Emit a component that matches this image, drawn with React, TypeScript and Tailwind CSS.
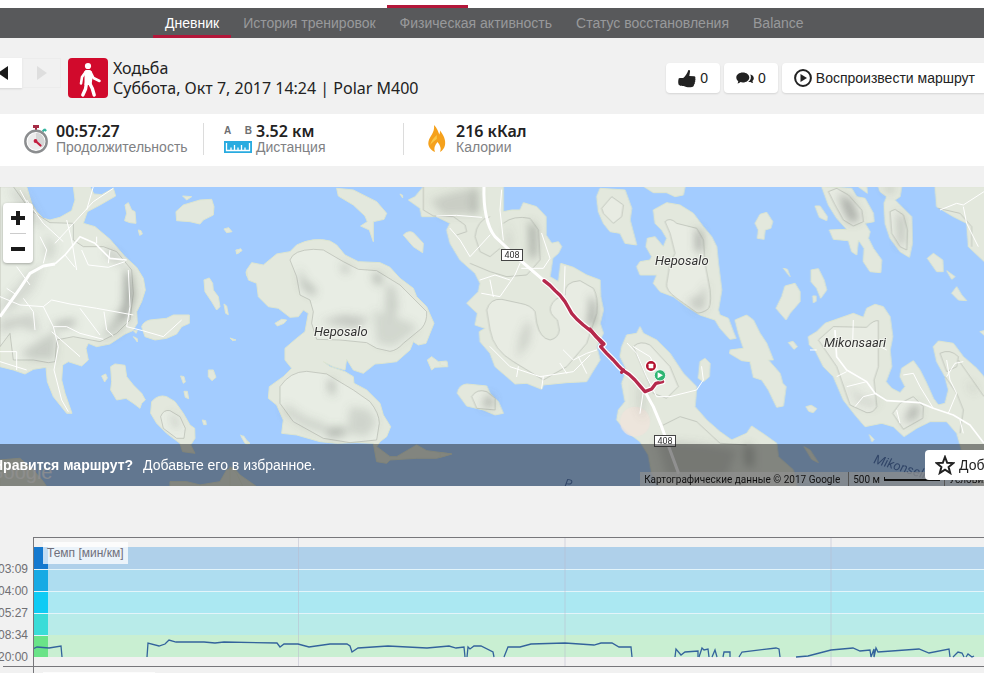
import React from 'react';
import clsx from 'clsx';

const navItems = ['Дневник', 'История тренировок', 'Физическая активность', 'Статус восстановления', 'Balance'];

const paceTicks = ['03:09', '04:00', '05:27', '08:34', '20:00'];

const zones = [
  { solid: '#1579cf', soft: '#afd0ea' },
  { solid: '#18aae4', soft: '#aeddf0' },
  { solid: '#0fcbf4', soft: '#abe8f2' },
  { solid: '#3adcd8', soft: '#b8ebe9' },
  { solid: '#6ae388', soft: '#c9efd2' },
];

const paceLines = [
  '0,112 4,110 16,111 28,109 29,120',
  '114,120 115,106 126,109 132,107 136,103 143,105 171,105 182,106 191,105 244,106 247,110 251,107 265,107 276,110 297,107 314,107 317,109 319,115 325,111 355,109 394,111 416,109 423,111 431,110 432,120',
  '434,120 435,110 437,112 441,109 448,109 460,115 461,120',
  '471,120 475,110 487,110 498,107 532,106 561,108 568,106 579,106 586,110 598,110 599,120',
  '642,120 643,112 648,118 652,115 665,114 665,120',
  '666,120 669,111 671,113 675,112 676,120',
  '679,120 682,113 684,120',
  '690,120 691,115 697,115 697,120',
  '706,120 709,115 743,111 746,112 747,120',
  '763,120 775,119 798,113 820,111 827,114 837,113 838,120 841,112 841,120 843,111 845,115 886,112 896,116 916,112 917,120',
  '920,120 925,115 929,116 931,120',
  '933,120 935,117 939,120 941,119',
];

const WalkIcon = () => (
  <svg viewBox="0 0 40 40" className="size-10 shrink-0 rounded-sm bg-[#d10a2c]" fill="#fff">
    <circle cx="20" cy="8" r="3.100" />
    <path d="M16.500 13.500Q17 12 18.500 12H21.500Q23 12 23.500 13.500L24.500 20 23.500 27H16.500z" />
    <g fill="none" stroke="#fff" strokeLinecap="round" strokeLinejoin="round">
      <path d="M18 13.500L14 19 13 25.500M22.500 14L25.500 20 31.500 23" strokeWidth="2.600" />
      <path d="M18.500 25L17.500 31 14.800 37M21.500 25L24.300 30.500 26.200 37" strokeWidth="3.400" />
    </g>
  </svg>
);

const StopwatchIcon = () => (
  <svg viewBox="0 0 28 30" className="h-[30px] w-7 shrink-0" fill="none">
    <path d="M9 1h6v3h-2v3h-2V4H9z" fill="#a62b45" />
    <path d="M18.500 7.500L20.500 5.500M20.200 5l2 2" stroke="#35b5a0" strokeWidth="2" />
    <circle cx="12" cy="17.500" r="10.700" fill="#fff" stroke="#8b8d8f" strokeWidth="2.400" />
    <circle cx="12" cy="17.500" r="8.500" fill="#ececec" />
    <path d="M12 17.500V9a8.500 8.500 0 0 1 6.100 14.500z" fill="#d6d6d6" />
    <path d="M11.500 17l5 4.500" stroke="#c41e3f" strokeWidth="2.200" strokeLinecap="round" />
    <circle cx="11.500" cy="17" r="1.900" fill="#c41e3f" />
  </svg>
);

const DistanceIcon = () => (
  <div className="w-7 shrink-0">
    <div className="flex justify-between text-[10px] leading-3 font-bold text-[#6d6e71]">
      <span>A</span>
      <span>B</span>
    </div>
    <svg viewBox="0 0 28 12" className="mt-1 h-3 w-7">
      <rect width="28" height="12" fill="#29abe0" />
      <path d="M2.500 2v7.500h23V2M7 9V6.500M10.500 9V4M14 9V6.500M17.500 9V4M21 9V6.500" stroke="#fff" strokeWidth="1.300" fill="none" />
    </svg>
  </div>
);

const FlameIcon = () => (
  <svg viewBox="0 0 28 30" className="h-[30px] w-7 shrink-0">
    <path d="M10 1c3 3 4.200 6.500 5.300 9.500.7-1.500.8-2.700.7-4 3.500 4.500 6 9.500 5 14.500-.6 3-2.300 5.600-5 7 1.300-3 .8-6-2.500-10-2.800 3.500-4 6.700-2.500 10-4.500-1.800-7.500-6-6.500-10.500C5.600 12 11 9 10 1z" fill="#f5a11c" />
    <path d="M12.800 11c-3 3-6.200 6.500-6.500 10 1.500-2.500 4.500-4.500 6.500-6z" fill="#fbc748" />
  </svg>
);

const ThumbIcon = () => (
  <svg viewBox="0 0 18 19" className="h-[19px] w-[18px]" fill="#222">
    <path d="M10.300 1.200c1.200-.7 2 .1 1.700 1.500L11.300 7l4.900.2c1.200.1 1.500 1.200 1 2 .5.700.4 1.600-.1 2.100.4.800.2 1.700-.4 2.200.3.900 0 1.800-.7 2.100 0 1.500-.7 2.300-2 2.500-3.200.5-6 .1-8.300-1.200-1.800.2-3.800-.1-4.900-.8C0 14.500 0 11.500.8 9.300c1.400-.4 3-.5 4.400-.3C7.500 7 9.300 4.300 10.300 1.200z" />
  </svg>
);

const CommentsIcon = () => (
  <svg viewBox="0 0 18 12" className="h-3 w-[18px]" fill="#222">
    <path d="M6.800.4c3.700 0 6.500 2.200 6.500 5s-2.800 5-6.500 5c-.9 0-1.600-.1-2.300-.3-.8.800-1.900 1.300-3 1.400.5-.7.8-1.500.7-2.400C1 8.200.300 6.900.300 5.400c0-2.800 2.800-5 6.500-5z" />
    <path d="M14.300 2.600c2 .5 3.500 1.900 3.500 3.700 0 1-.5 2-1.300 2.700 0 .9.300 1.500.7 2-1.100 0-2-.4-2.700-1l-2.300.1c2.700-1.800 3.400-4.700 2.100-7.500z" />
  </svg>
);

const PlayIcon = () => (
  <svg viewBox="0 0 18 18" className="size-[18px]">
    <circle cx="9" cy="9" r="7.900" fill="none" stroke="#222" strokeWidth="2" />
    <path d="M6.500 5l6.500 4-6.500 4z" fill="#222" />
  </svg>
);

// The land masses are kept in four map tiles, each drawn at three times the screen scale.
const land = {
  west: [
    'M0 20H80L95 70 110 95 130 115 150 120 180 112 215 92 225 60 220 20H270L282 42 305 44 340 25 347 48 300 75 262 95 250 130 285 140 330 178 375 230 410 262 430 295 436 330 425 365 410 395 412 430 398 452 375 462 330 492 290 500 265 490 258 505 265 540 245 558 205 545 188 555 185 600 195 640 216 700 200 700 160 650 142 605 138 562 100 568 75 582 40 570 0 560z',
    'M425 440Q430 425 450 420L500 415 520 405 568 405 568 430 545 440 530 462 500 475 465 480 435 470z',
    'M375 75L385 68 395 90 405 95 408 130 390 128 374 122 380 100z',
    'M528 95L550 75 600 60 635 58 642 80 640 105 610 120 600 132 570 125 530 122z',
    'M612 300L628 294 638 310 640 330 655 350 660 380 650 390 635 365 615 335z',
    'M332 560L345 552 375 556 380 590 400 615 425 640 436 660 425 670 420 685 400 670 378 655 350 660 332 630 335 605z',
    'M455 665Q475 642 500 650L525 665 550 700 570 735 584 745 585 775 572 795 585 820 548 815 540 790 500 760 470 730 452 700z',
    'M625 570L640 570 648 592 636 602 625 590zM722 765L750 790 740 792zM548 48L575 50 560 60zM415 150l8 2 4 10-8 4zM672 147l14-4 10 12-16 3zM708 210l14-2-4 10-8 4zM672 372l8 6 5 26-8-4zM738 275l12-6v32l-10-14zM305 588l12-6 5 12-8 12zM542 588l10 2 4 16-6 4zM552 634l10 0 4 22-10-4zM607 720l10 2 2 12-8 0zM690 474l18 6-10 2zM400 470l12 6 0 10zM400 452h12l-4 8z',
    'M0 840L60 835 100 870 130 905 140 920H0zM510 905H560L600 915 660 905 680 870 700 862 720 885 770 920H510z',
  ],
  heposalo: [
    'M50 270L65 248 100 255 140 222 180 215 200 195Q250 170 300 183L320 195 345 225 385 245 450 248 480 262 510 295 550 325 560 350 590 380 612 430 600 460 588 490 565 495 550 485 540 510 500 545 460 550 435 552 400 580 370 570 350 538 345 570 310 560 280 545 300 560 345 575 370 590 372 610 410 630 450 670 460 705 482 740 470 770 450 785 440 800 480 830 500 830 560 795 590 812 665 822 620 835 560 835 480 840 470 850 440 845 430 790 380 788 320 790 270 785 200 765 155 760 160 720 140 675 115 655 118 620 160 590 185 565 165 540 165 505 200 475 225 455 235 400 220 390 205 410 180 412 145 385 115 380 85 350 80 310 55 300z',
    'M320 25L370 30 440 65 470 100 462 118 430 125 430 185 418 150 392 138 412 125 405 108 370 75 325 48z',
    'M520 165Q535 150 550 158L580 190 578 218 550 200z',
    'M592 540L605 530 625 545 652 548 650 560 615 562 605 570z',
    'M135 430l20-12 15 2-8 10-20 8zM18 212l14-6 4 6-12 6zM33 768l8 0 14 22-10 0zM0 860L20 880 38 918H0zM510 42l8 4 0 8z',
  ],
  central: [
    'M-95 60L-75 50-50 20H190V95L215 90 240 90 250 68 290 80 318 110 318 165 335 190 355 185 365 200 355 220 338 235 330 290 355 305 362 250 400 262 440 285 480 300 482 350 490 390 480 430 490 460 470 500 480 540 455 580 440 605 380 608 310 615 305 628 260 610 225 612 200 590 165 560 150 520 120 485 118 455 135 445 105 435 112 400 80 370 115 335 120 310 105 280 60 240 30 190 20 150 30 130-10 110-55 110-60 85z',
    'M52 640Q55 615 80 612L140 618 150 640 175 665 190 700 165 705 130 690 80 678z',
    'M470 50L480 25 555 30 575 85 570 120 590 195 555 190 540 160 510 155 490 130 475 95z',
    'M612 20H735L730 45 705 50 680 38 640 38z',
    'M640 90L680 68 720 75 760 100 790 140 815 170 830 200 835 250 845 330 835 390 840 405 865 415 880 455 888 475 870 478 840 445 825 420 780 405 740 380 700 350 660 335 640 310 650 285 600 285 590 260 600 245 630 240 635 230 618 200 622 175 645 170 670 200 680 175 665 150 645 130z',
    'M545 500L560 465 590 460 600 440 610 460 650 480 690 520 730 580 770 620 765 680 800 720 840 755 875 780 920 760 935 738 975 765 1010 790 1015 830 1060 870 1070 920H660L635 880 625 825 600 785 560 755 530 720 535 690 555 665 545 610 560 570 540 530z',
    'M780 545L795 535 810 550 808 590 790 605 775 595z',
    'M0 545l20-2 3 18-23-6zM0 818l35 4-35 10z',
  ],
  east: [
    'M165 130L180 103 200 97 218 125 212 145 195 150 192 178 172 175 175 150z',
    'M345 78L360 78 382 110 380 122 358 112z',
    'M365 20L455 25 470 50 495 55 520 100 522 125 495 130 510 155 505 175 520 205 545 240 542 278 510 275 490 245 492 205 475 180 470 225 455 215 445 182 400 178 388 150 440 148 410 115 385 75zM475 20H500L502 40z',
    'M535 20H605L600 50 585 60 600 75 635 110 637 190 628 232 600 215 570 175 555 130 552 70 560 50 540 35z',
    'M705 20H860V252L805 200 800 130 760 110 710 80z',
    'M682 235L700 220 728 240 730 275 710 275zM740 272L765 290 755 298zM755 340L770 320 785 345 800 362 775 360z',
    'M333 270L355 266 372 300 380 330 362 355 350 325 333 305zM338 348l10 0 0 16-8 4zM250 265L262 268 270 290z',
    'M228 385L245 350 255 318 285 310 300 335 300 365 270 400 258 420z',
    'M105 420L140 405 160 420 180 460 200 490 220 540 205 540 240 580 248 610 258 620 250 678 230 682 205 630 185 600 160 592 150 545 125 542 88 520 90 510 130 505 115 460z',
    'M265 488l14-4 13 16-10 8zM318 680l16-4 16 10-10 12-14-4zM508 764l14 14-6 8zM312 800L330 810 355 848 335 838zM840 455l20-5v22z',
    'M325 470L350 455 375 430 460 400 490 412 500 385 525 373 550 380 570 410 578 470 570 510 575 560 558 605 575 625 600 638 615 620 600 590 605 565 640 542 660 570 680 610 700 655 715 675 735 670 745 630 735 590 710 545 700 500 715 483 760 490 790 530 830 565 860 600V920H820L785 810 770 760 740 725 690 725 650 745 612 770 580 740 545 730 495 740 465 705 430 660 400 590 370 560 345 510 328 495z',
  ],
};

const track =
  'M312 302L330 316 345 332 360 346 375 365 386 384 395 400 410 417 430 435 455 455 468 470 480 480 492 492 482 500 500 520 520 540 535 557 550 572 568 584 585 600 602 620 615 635 635 627 648 610 668 605';

const Land = ({ shapes }: { shapes: string[] }) => (
  <g fill="#e3e8dd" stroke="#dde5d0" strokeWidth="3" strokeLinejoin="round">
    {shapes.map((d) => (
      <path key={d} d={d} />
    ))}
  </g>
);

const RouteMap = () => (
  <svg
    viewBox="0 187 984 299"
    preserveAspectRatio="xMidYMid slice"
    className="absolute inset-0 size-full"
    role="img"
    aria-label="Маршрут"
  >
    <defs>
      <filter id="relief" x="-50%" y="-50%" width="200%" height="200%">
        <feGaussianBlur stdDeviation="12" />
      </filter>
    </defs>
    <rect x="0" y="187" width="984" height="299" fill="#a3ccff" />

    <g transform="translate(0 180) scale(.3333)" fill="none">
      <Land shapes={land.west} />
      <g fill="#edf1ec" fillOpacity=".5" stroke="#b5bab0" strokeWidth="2">
        <path d="M0 500L30 460 40 540 100 540 145 548 165 545 170 480 220 470 300 485 350 460 390 420 400 340 395 270 350 215 310 200 250 200 220 180V130L150 128 90 90 40 20H0z" />
        <path d="M482 710Q490 688 510 692L540 710 556 745 552 775 530 775 490 745z" />
      </g>
      <g filter="url(#relief)" fill="#6f746f">
        <path d="M375 260l20 30 8 60-20 60-25 10 15-60z" opacity=".6" />
        <path d="M60 520l60-40 50-30-5 90-70 0z" opacity=".26" />
        <path d="M160 430l60-12 10 14-60 12z" opacity=".5" />
        <path d="M0 400l40-10 60-60 30-80-40 20-90 100z" opacity=".16" />
        <path d="M0 420l100-20 20 60-60-20-60 20z" opacity=".22" />
        <path d="M320 200l40 30 10 30-50-30z" opacity=".3" />
        <path d="M20 20l60 20 60 110-60-30z" opacity=".16" />
        <path d="M140 160l30 40-20 50-20-30z" opacity=".18" />
        <path d="M350 395l40 10-30 50-60 25z" opacity=".28" />
        <path d="M510 695l20 20 10 30-20-5z" opacity=".28" />
      </g>
      <g stroke="#fff" strokeWidth="3" strokeLinejoin="round">
        <path d="M0 410L60 325 90 280 130 258 165 252" strokeWidth="9" />
        <path d="M165 252L195 225 240 170 285 190 330 235 380 240" strokeWidth="5" />
        <path d="M0 350L60 375 130 380 155 360 210 372 290 385 400 405M130 380L160 440 175 500 162 570 185 660 205 695M160 440H200L240 460 310 478M240 385L300 465M312 395L320 450 340 468M155 455L240 530M340 25L280 65 225 125 165 190M80 60L130 130 190 185M200 120L215 180 230 270M70 355L100 395 105 450M0 515H50V570M0 545L80 570M245 210L265 255 325 262 375 245M385 270L390 380 380 440 428 452 490 470 545 420M120 170L140 210 130 250M60 30L90 85M280 20L260 90M50 260L90 315M20 325L50 345M330 210L325 250M290 170V190M195 225L225 262" />
      </g>
    </g>

    <g transform="translate(230 180) scale(.3333)" fill="none">
      <Land shapes={land.heposalo} />
      <g fill="#edf1ec" fillOpacity=".5" stroke="#b5bab0" strokeWidth="2" strokeLinejoin="round">
        <path d="M180 240Q190 210 250 208L280 210 340 245 385 268 440 272 510 315 590 395Q592 425 575 445L520 490Q500 512 480 514L440 505 410 488 330 480 260 478 245 430 250 395 240 360 210 345 200 290z" />
        <path d="M150 620Q180 575 230 574L290 582 370 630 420 665Q448 700 448 730L440 780 360 788 280 775 190 725 150 670z" />
      </g>
      <g filter="url(#relief)" fill="#6f746f">
        <path d="M205 260l20 40 35 30-10 20-35-30z" opacity=".38" />
        <path d="M330 250l30 16-15 15z" opacity=".5" />
        <path d="M430 275l30 15-10 30-22-20z" opacity=".42" />
        <path d="M470 310l25 10 10 60-15 40-25-30z" opacity=".24" />
        <path d="M270 425l70-20 80 10-40 30z" opacity=".3" />
        <path d="M430 390l60 20 60 20 10 20-70 50-50-10z" opacity=".18" />
        <path d="M297 595l15 10v45l-15-20z" opacity=".5" />
        <path d="M165 670l60 40 60 20-5 30-60-20-60-40z" opacity=".2" />
        <path d="M280 745l60-5 10 25-50 10z" opacity=".42" />
        <path d="M360 680l60 10 20 40-30 40-60-10z" opacity=".2" />
      </g>
    </g>

    <g transform="translate(440 180) scale(.3333)" fill="none">
      <Land shapes={land.central} />
      <circle cx="585" cy="725" r="45" fill="#efe3dc" fillOpacity=".8" />
      <g fill="#edf1ec" fillOpacity=".45" stroke="#b5bab0" strokeWidth="2" strokeLinejoin="round">
        <path d="M-50 20L-50 90-20 108 40 110 75 135 80 155 50 165" fill="none" />
        <path d="M190 130Q220 105 270 115L295 150 300 240 260 285 200 290 150 275 90 250M150 110Q110 120 105 170L120 215 150 230 180 205" fill="none" />
        <path d="M140 390Q150 355 185 358L240 370Q272 375 285 395L290 430Q300 475 330 480 355 475 358 450L352 420Q325 400 332 380 340 355 375 345 370 305 420 302L460 325Q475 350 470 400L440 490 380 560 310 600 220 545Q160 510 150 450z" />
        <path d="M485 85L515 50 550 75 545 110 520 130 490 100z" />
        <path d="M675 125Q690 110 710 130L770 145 790 180 795 250 810 330Q815 385 800 390 780 402 770 398L710 355Q675 330 680 310L690 250 705 220 690 160z" />
        <path d="M580 500Q600 480 630 495L690 560 715 620 680 655 640 640 610 570z" />
        <path d="M660 740L720 710 770 725 840 790 920 795" fill="none" />
        <path d="M95 650Q110 625 140 635L165 655 165 690 110 685z" />
      </g>
      <g filter="url(#relief)" fill="#6f746f">
        <path d="M-30 60l60-20 70-15 10 75-100 5z" opacity=".22" />
        <path d="M98 25h15v75l-15 0z" opacity=".4" />
        <path d="M268 120l20 25v80l-16 15z" opacity=".6" />
        <path d="M203 130l10 60-10 15z" opacity=".35" />
        <path d="M450 340l16 35v55l-25 10 8-45z" opacity=".6" />
        <path d="M260 420l16 20-8 50-40 50 10-70z" opacity=".2" />
        <path d="M768 140l18 20v60l-18-10z" opacity=".6" />
        <path d="M740 365l40-20 20-40-5 80-20 10z" opacity=".28" />
        <path d="M145 640l18 20-8 26-30-8z" opacity=".45" />
        <path d="M590 600l30 40-10 80-20-40z" opacity=".16" />
        <path d="M650 780l120 10 120 20-30 80H680z" opacity=".22" />
        <path d="M915 790l25 15 0 60-25-10z" opacity=".45" />
      </g>
      <g stroke="#fff" strokeLinejoin="round" strokeLinecap="round" strokeWidth="3">
        <path d="M-10 108L50 106 125 112M30 145L60 180 90 230 150 165M185 30L180 90 190 180M240 250L225 285 180 350 125 340M245 265L310 265 330 235 305 160M120 300L165 285 210 300M160 350L150 300M150 500L210 560 300 590 400 575 450 525M310 590L305 625M370 510L400 540 440 520 470 510M380 580L360 550M235 560L230 590M415 530L440 580" />
        <path d="M562 490L590 520 620 590 650 650 690 650 770 630 790 600 785 560M580 500L630 530 670 600M610 635L600 700M375 260L372 350" />
        <path d="M132 20C130 80 140 140 165 170L240 240 312 302M615 635L640 680 665 740 690 810 715 878" strokeWidth="9" />
      </g>
      <g strokeLinejoin="round" strokeLinecap="round">
        <path d={track} stroke="#fff" strokeWidth="17" />
        <path d={track} stroke="#b5294c" strokeWidth="10" />
        <path d="M450 447L484 488M545 577L550 570" stroke="#b5294c" strokeWidth="10" />
      </g>
      <circle cx="633" cy="558" r="17" fill="#b3122f" stroke="#fff" strokeWidth="4" />
      <rect x="626" y="551" width="14" height="14" rx="2" fill="#fff" />
      <circle cx="660" cy="586" r="17" fill="#2fb572" stroke="#e9f5ee" strokeWidth="3" />
      <path d="M653 577l16 9-16 9z" fill="#fff" />
    </g>

    <g transform="translate(700 180) scale(.3333)" fill="none">
      <Land shapes={land.east} />
      <g fill="#edf1ec" fillOpacity=".45" stroke="#b5bab0" strokeWidth="2" strokeLinejoin="round">
        <path d="M385 35L410 25 445 45 485 90 490 125 460 138 430 120 405 75zM570 95L585 88 610 105 622 150 620 210 600 200 575 160z" />
        <path d="M355 480L400 440 500 442Q520 420 535 422L535 560 522 600 530 680Q520 700 500 698L450 675 410 560z" />
        <path d="M578 700L600 670 640 650 670 680 668 715 610 748z" />
        <path d="M720 520Q750 505 775 530L770 560 740 575zM735 590L770 640 790 690 780 760M775 540L852 650M715 85L780 100 815 140V200" fill="none" />
      </g>
      <g filter="url(#relief)" fill="#6f746f">
        <path d="M415 40l40 20 25 60-30 10-20-40z" opacity=".5" />
        <path d="M592 90l20 30v70l-15 10z" opacity=".42" />
        <path d="M630 680l30-10-5 45-45 15z" opacity=".4" />
        <path d="M440 610l50 40 50 10-20 25-50-15z" opacity=".16" />
        <path d="M800 600l30 30-10 10z" opacity=".3" />
        <path d="M545 20h40l-10 20z" opacity=".35" />
      </g>
      <g stroke="#fff" strokeWidth="3" strokeLinejoin="round">
        <path d="M405 450L410 530 440 570 500 605 525 640 560 662 660 668 700 685 760 705 810 735 852 790" strokeWidth="5" />
        <path d="M460 420L458 490 400 500M330 510H350M410 590L440 575M440 620L500 605M465 680L490 650 530 640M610 585L640 580 660 620 700 685M740 540L750 600 770 640 745 700M740 590L765 550 790 545M720 90L770 70 790 75 852 35M790 80L800 130 835 200M520 490L560 510M600 730L590 690M790 760L780 720" />
      </g>
    </g>

    <g fontFamily="Roboto, sans-serif" fontSize="13" fontStyle="italic" fill="#333" stroke="#f2f4ee" strokeWidth="2" paintOrder="stroke">
      <text x="314" y="336">Heposalo</text>
      <text x="655" y="265">Heposalo</text>
      <text x="824" y="347">Mikonsaari</text>
    </g>
    <g fontFamily="Roboto, sans-serif" fontSize="9" fill="#333" textAnchor="middle">
      <rect x="501.500" y="249.500" width="21" height="11" fill="#fff" stroke="#444" />
      <text x="512" y="258">408</text>
      <rect x="654.500" y="435.500" width="21" height="11" fill="#fff" stroke="#444" />
      <text x="665" y="444">408</text>
    </g>
    <g fontFamily="Roboto, sans-serif" fontStyle="italic" fontSize="13" fill="#3f69ad">
      <text transform="translate(873 463) rotate(17)">Mikonselkä</text>
      <text transform="translate(564 487) rotate(10)" fontSize="12">P</text>
    </g>
  </svg>
);

const panelButton = 'flex h-[30px] items-center gap-1 rounded-sm bg-white px-3 text-sm whitespace-nowrap text-[#222] shadow-[0_1px_2px_rgba(0,0,0,0.12)]';

const stats = [
  { icon: <StopwatchIcon />, value: '00:57:27', label: 'Продолжительность' },
  { icon: <DistanceIcon />, value: '3.52 км', label: 'Дистанция' },
  { icon: <FlameIcon />, value: '216 кКал', label: 'Калории' },
];

const PaceChart = () => (
  <section className="mt-[51px]">
    <div className="flex h-[129px]">
      <div className="flex w-[33px] shrink-0 flex-col items-end pt-[21px] pr-[5px] text-xs leading-[22px] text-[#6f6f73]">
        {paceTicks.map((t) => (
          <span key={t}>{t}</span>
        ))}
      </div>
      <div className="relative flex-1">
        <svg viewBox="0 0 951 129" preserveAspectRatio="none" className="absolute inset-0 size-full">
          {zones.map((z, i) => (
            <g key={z.solid}>
              <rect x="0" y={10 + i * 22} width="951" height="22" fill={z.soft} />
              <rect x="0" y={10 + i * 22} width="15" height="22" fill={z.solid} />
              {i > 0 && <rect x="0" y={10 + i * 22} width={i === 4 ? 15 : 951} height="1" fill="#e3f4fa" />}
            </g>
          ))}
          <path d="M265.500 1V129M532 1V129M798 1V129" stroke="#b9b9cb" strokeOpacity=".5" fill="none" />
          <g fill="none" stroke="#33639c" strokeWidth="1.300">
            {paceLines.map((p) => (
              <polyline key={p} points={p} vectorEffect="non-scaling-stroke" />
            ))}
          </g>
          <path d="M0 .5H951M.5 0V129" stroke="#77777b" fill="none" />
        </svg>
        <span className="absolute top-[5px] left-[10px] bg-white/75 px-1 text-xs leading-[22px] text-[#6f6f7b]">Темп [мин/км]</span>
      </div>
    </div>
    <div className="ml-[3px] flex h-10 border-t border-[#77777b] text-xs text-[#6f6f73]">
      <span className="w-[30px] shrink-0 pt-[3px] pr-[5px] text-right">144</span>
      <div className="flex-1 border-l border-[#77777b] pt-[5px] pl-[9px]">
        <span className="block h-5 w-28 bg-white/75" />
      </div>
    </div>
  </section>
);

const App: React.FC = () => {
  return (
    <div className="h-screen overflow-hidden bg-[#f1f1f1] font-['Liberation_Sans',Arial,sans-serif] text-[#222]">
      <div className="h-2 bg-white pt-[5px]">
        <div className="ml-[387px] h-[3px] w-[81px] bg-[#b3173a]" />
      </div>
      <nav className="flex h-[30px] bg-[#58595b] pl-[153px] text-sm">
        {navItems.map((item, i) => (
          <a
            key={item}
            href="#"
            className={clsx(
              'flex items-center border-b-[3px] px-3 pt-[3px] whitespace-nowrap',
              i === 0 ? 'border-[#b3173a] text-white' : 'border-transparent text-[#98999b]'
            )}
          >
            {item}
          </a>
        ))}
      </nav>

      <header className="flex h-[76px] items-start justify-between pt-5">
        <div className="flex">
          <div className="-ml-4 flex h-[30px]">
            <button aria-label="Назад" className="flex w-[38px] items-center justify-center bg-white shadow-[0_1px_2px_rgba(0,0,0,0.12)]">
              <svg viewBox="0 0 10 14" className="h-[14px] w-[10px]" fill="#1a1a1a">
                <path d="M10 0v14L0 7z" />
              </svg>
            </button>
            <button aria-label="Вперёд" disabled className="flex w-[39px] items-center justify-center border border-[#ececec]">
              <svg viewBox="0 0 10 14" className="h-[14px] w-[10px]" fill="#dedede">
                <path d="M0 0v14l10-7z" />
              </svg>
            </button>
          </div>
          <div className="ml-[7px] flex gap-[5px]">
            <WalkIcon />
            <h1 className="font-['Noto_Sans',sans-serif] text-base leading-5 whitespace-nowrap">
              Ходьба
              <br />
              Суббота, Окт 7, 2017 14:24 | Polar M400
            </h1>
          </div>
        </div>
        <div className="-mr-[3px] flex gap-1 pt-[5px]">
          <button className={panelButton}>
            <ThumbIcon />0
          </button>
          <button className={panelButton}>
            <CommentsIcon />0
          </button>
          <button className={panelButton}>
            <PlayIcon />
            Воспроизвести маршрут
          </button>
        </div>
      </header>

      <section className="flex h-[52px] items-center bg-white pb-0.5 pl-1">
        {stats.map((s, i) => (
          <div key={s.label} className={clsx('flex h-8 w-[200px] items-center gap-1 pl-5', i < 2 && 'border-r border-[#dcdcdc]')}>
            {s.icon}
            <div>
              <div className="font-['Noto_Sans',sans-serif] text-base leading-4 font-semibold">{s.value}</div>
              <div className="text-sm leading-4 text-[#808184]">{s.label}</div>
            </div>
          </div>
        ))}
      </section>

      <section className="relative mt-[21px] h-[299px] overflow-hidden">
        <RouteMap />
        <div className="absolute top-4 left-[3px] w-[30px] rounded-sm bg-white px-[7px] shadow-[0_1px_3px_rgba(0,0,0,0.3)]">
          <button aria-label="Приблизить" className="flex h-[30px] w-full items-center justify-center">
            <svg viewBox="0 0 14 14" className="size-3.5" fill="#1a1a1a">
              <path d="M5 0h4v5h5v4H9v5H5V9H0V5h5z" />
            </svg>
          </button>
          <button aria-label="Отдалить" className="flex h-[30px] w-full items-center justify-center border-t border-[#ccc]">
            <svg viewBox="0 0 14 4" className="h-1 w-3.5" fill="#1a1a1a">
              <path d="M0 0h14v4H0z" />
            </svg>
          </button>
        </div>

        <div className="absolute bottom-0 -left-3 text-xl leading-7 text-white/80">Google</div>
        <div className="absolute right-0 bottom-0 flex h-3.5 items-center bg-white/70 font-[Roboto,sans-serif] text-[10px] whitespace-nowrap text-black">
          <span className="px-1">Картографические данные © 2017 Google</span>
          <span className="ml-1 flex items-center gap-1 border-l border-[#888] px-1">
            500 м
            <span className="h-1 w-14 border-x border-b-2 border-black" />
          </span>
          <span className="w-10 overflow-hidden border-l border-[#888] px-1">Условия</span>
        </div>
        <div className="absolute inset-x-0 bottom-0 flex h-[42px] items-center bg-[#222]/50 text-sm whitespace-nowrap text-white">
          <strong className="-ml-[7px]">Нравится маршрут?</strong>
          <span className="ml-2.5">Добавьте его в избранное.</span>
        </div>
        <button className="absolute right-0 bottom-1.5 flex h-[30px] w-[59px] items-center gap-1 overflow-hidden rounded-l-sm bg-white pl-2.5 text-sm whitespace-nowrap text-[#222]">
          <svg viewBox="0 0 20 20" className="size-5 shrink-0" fill="none" stroke="#222" strokeWidth="2">
            <path d="M10 2l2.200 5.800 6.200.3-4.800 3.900 1.600 6-5.200-3.400L4.800 18l1.600-6L1.600 8.100l6.200-.3z" />
          </svg>
          Добавить
        </button>
      </section>

      <PaceChart />
    </div>
  );
};

export default App;
